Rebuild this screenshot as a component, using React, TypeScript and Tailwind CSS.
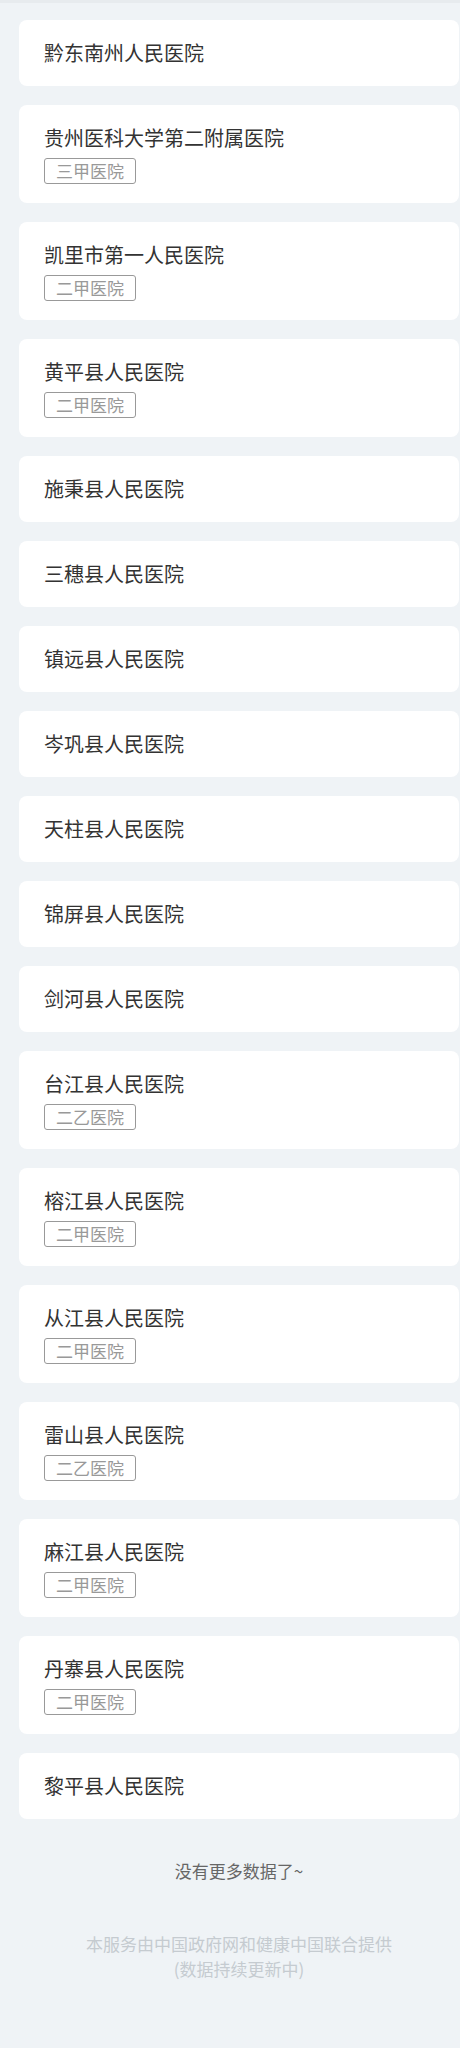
import React from "react";

type Hospital = { name: string; level?: string };

const hospitals: Hospital[] = [
  { name: "黔东南州人民医院" },
  { name: "贵州医科大学第二附属医院", level: "三甲医院" },
  { name: "凯里市第一人民医院", level: "二甲医院" },
  { name: "黄平县人民医院", level: "二甲医院" },
  { name: "施秉县人民医院" },
  { name: "三穗县人民医院" },
  { name: "镇远县人民医院" },
  { name: "岑巩县人民医院" },
  { name: "天柱县人民医院" },
  { name: "锦屏县人民医院" },
  { name: "剑河县人民医院" },
  { name: "台江县人民医院", level: "二乙医院" },
  { name: "榕江县人民医院", level: "二甲医院" },
  { name: "从江县人民医院", level: "二甲医院" },
  { name: "雷山县人民医院", level: "二乙医院" },
  { name: "麻江县人民医院", level: "二甲医院" },
  { name: "丹寨县人民医院", level: "二甲医院" },
  { name: "黎平县人民医院" },
];

const HospitalCard = ({ hospital }: { hospital: Hospital }) => {
  return (
    <div className="bg-white rounded-[8px] px-[25px] py-[19px] flex flex-col items-start gap-[6px]">
      <span className="text-[20px] leading-[28px] text-[#333]">
        {hospital.name}
      </span>
      {hospital.level && (
        <span className="border border-[#999] rounded-[3px] px-[11px] text-[17px] leading-[24px] text-[#999]">
          {hospital.level}
        </span>
      )}
    </div>
  );
};

export default function App() {
  return (
    <div
      className="w-[460px] min-h-[2048px] overflow-hidden bg-[#eff3f6] border-t-[3px] border-[#e7ebee]"
      style={{ fontFamily: '"Noto Sans CJK SC", "Noto Sans", sans-serif' }}
    >
      <div className="w-[478px] px-[19px] pt-[17px] flex flex-col gap-[19px]">
        {hospitals.map((h) => (
          <HospitalCard key={h.name} hospital={h} />
        ))}
      </div>
      <div className="w-[478px] flex flex-col items-center">
        <span className="mt-[39px] text-[17px] leading-[26px] text-[#666]">
          没有更多数据了~
        </span>
        <div className="mt-[47px] flex flex-col items-center text-[17px] leading-[25px] text-[#c5cbd0]">
          <span>本服务由中国政府网和健康中国联合提供</span>
          <span>(数据持续更新中)</span>
        </div>
      </div>
    </div>
  );
}
